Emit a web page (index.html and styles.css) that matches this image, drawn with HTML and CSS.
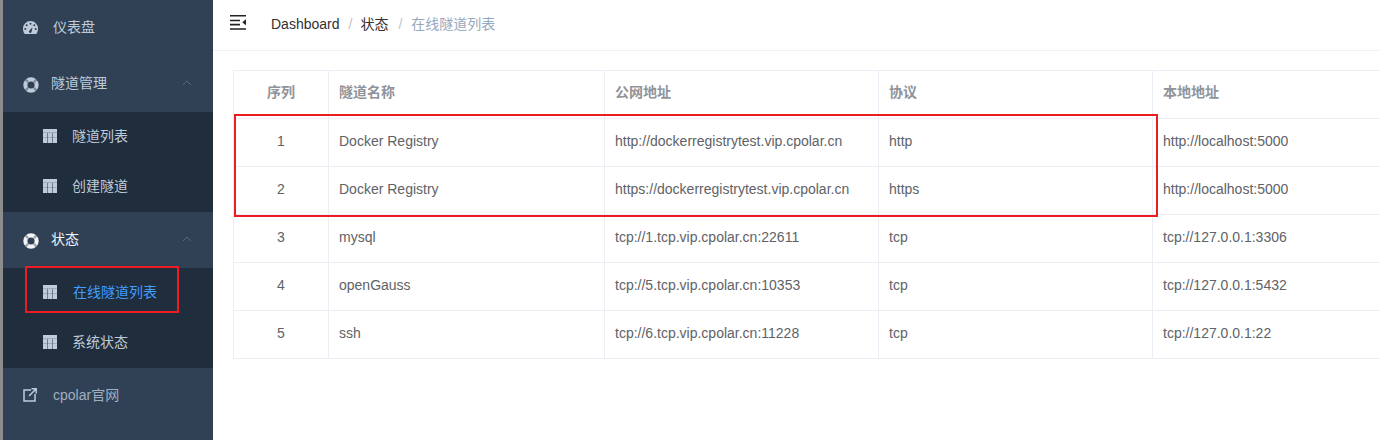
FILE: index.html
```html
<!DOCTYPE html>
<html lang="zh">
<head>
<meta charset="utf-8">
<title>在线隧道列表</title>
<link rel="stylesheet" href="styles.css">
</head>
<body>
<svg class="defs" width="0" height="0" aria-hidden="true">
  <defs>
    <symbol id="i-table" viewBox="0 0 14 14">
      <path fill="currentColor" d="M0 0h14v14H0z"/>
      <path fill="#1f2d3d" fill-opacity=".2" d="M0 3h14v1H0zM0 8h14v1H0z"/>
      <path fill="#1f2d3d" fill-opacity=".5" d="M4 4h1v10H4zM9 4h1v10H9z"/>
    </symbol>
    <symbol id="i-ring" viewBox="0 0 16 16">
      <path fill="currentColor" fill-rule="evenodd" d="M8 .3a7.700 7.700 0 1 1 0 15.400A7.700 7.700 0 0 1 8 .3zM8 4.400a3.600 3.600 0 1 0 0 7.200 3.600 3.600 0 0 0 0-7.200z"/>
      <path stroke="#304156" stroke-width="2.400" stroke-opacity=".45" d="M2.500 2.500l2.600 2.600M13.500 2.500l-2.600 2.600M2.500 13.500l2.600-2.600M13.500 13.500l-2.600-2.600"/>
    </symbol>
  </defs>
</svg>
<div class="app">
  <aside class="sidebar">
    <a class="item"><svg class="ico-gauge" viewBox="0 0 15 13"><path fill="currentColor" fill-rule="evenodd" d="M7.500 0A7.500 7.500 0 0 1 15 7.500c0 1.900-.5 3.700-1.500 5.200-.2.2-.4.3-.7.3H2.200c-.3 0-.5-.1-.7-.3A8.500 8.500 0 0 1 0 7.500 7.500 7.500 0 0 1 7.500 0zM7.500 1.700a1 1 0 1 0 0 2 1 1 0 0 0 0-2zM3.700 3.300a1 1 0 1 0 0 2 1 1 0 0 0 0-2zM11.300 3.300a1 1 0 1 0 0 2 1 1 0 0 0 0-2zM2.300 7a1 1 0 1 0 0 2 1 1 0 0 0 0-2zM12.700 7a1 1 0 1 0 0 2 1 1 0 0 0 0-2zM6.600 9.400a1.300 1.300 0 1 0 1.800 1.800c.4-.4 1-3.700 1-4.600-.7.5-2.400 2.400-2.800 2.800z"/></svg><span class="label">仪表盘</span></a>

    <div class="item head"><svg class="ico-ring"><use href="#i-ring"/></svg><span class="label tight">隧道管理</span><svg class="chev" viewBox="0 0 10 6"><path d="M1 5l4-4 4 4" fill="none" stroke="currentColor"/></svg></div>
    <div class="sub">
      <a class="sub-item"><svg class="ico-table"><use href="#i-table"/></svg><span>隧道列表</span></a>
      <a class="sub-item"><svg class="ico-table"><use href="#i-table"/></svg><span>创建隧道</span></a>
    </div>

    <div class="item head is-open"><svg class="ico-ring"><use href="#i-ring"/></svg><span class="label tight">状态</span><svg class="chev" viewBox="0 0 10 6"><path d="M1 5l4-4 4 4" fill="none" stroke="currentColor"/></svg></div>
    <div class="sub">
      <a class="sub-item is-active"><svg class="ico-table"><use href="#i-table"/></svg><span>在线隧道列表</span></a>
      <a class="sub-item"><svg class="ico-table"><use href="#i-table"/></svg><span>系统状态</span></a>
    </div>

    <a class="item muted"><svg class="ico-link" viewBox="0 0 14 14"><path d="M8 2H1v11h11V6M6 8l7-7M8.500 .8h4.700v4.700" fill="none" stroke="currentColor" stroke-width="1.500"/></svg><span class="label">cpolar官网</span></a>

    <div class="mark mark-side"></div>
  </aside>

  <main class="main">
    <header class="navbar">
      <svg class="ico-ham" viewBox="0 0 16 15"><path fill="#222" d="M0 0h16v1.600H0zM0 4.700h10v1.600H0zM0 8.800h10v1.600H0zM0 13.200h16v1.600H0zM16 4.200v6l-3.800-3z"/></svg>
      <nav class="crumbs">
        <span class="crumb">Dashboard</span><i>/</i><span class="crumb cjk">状态</span><i class="wide">/</i><span class="crumb cjk last">在线隧道列表</span>
      </nav>
    </header>
    <section class="content">
      <table class="tbl">
        <colgroup><col class="c1"><col class="c2"><col class="c3"><col class="c4"><col class="c5"></colgroup>
        <thead>
          <tr><th class="num">序列</th><th>隧道名称</th><th>公网地址</th><th>协议</th><th>本地地址</th></tr>
        </thead>
        <tbody>
          <tr><td class="num">1</td><td>Docker Registry</td><td>http://dockerregistrytest.vip.cpolar.cn</td><td>http</td><td>http://localhost:5000</td></tr>
          <tr><td class="num">2</td><td>Docker Registry</td><td>https://dockerregistrytest.vip.cpolar.cn</td><td>https</td><td>http://localhost:5000</td></tr>
          <tr><td class="num">3</td><td>mysql</td><td>tcp://1.tcp.vip.cpolar.cn:22611</td><td>tcp</td><td>tcp://127.0.0.1:3306</td></tr>
          <tr><td class="num">4</td><td>openGauss</td><td>tcp://5.tcp.vip.cpolar.cn:10353</td><td>tcp</td><td>tcp://127.0.0.1:5432</td></tr>
          <tr><td class="num">5</td><td>ssh</td><td>tcp://6.tcp.vip.cpolar.cn:11228</td><td>tcp</td><td>tcp://127.0.0.1:22</td></tr>
        </tbody>
      </table>
      <div class="mark mark-table"></div>
    </section>
  </main>
</div>
</body>
</html>
```
FILE: styles.css
```css
* { box-sizing: border-box; }
html, body { margin: 0; height: 100%; overflow: hidden; background: #fff; }
body {
  font-family: "Liberation Sans", "Noto Sans CJK SC", sans-serif;
  font-size: 14px;
  color: #606266;
}
.defs { position: absolute; }
.app { display: flex; height: 440px; width: 1380px; }

/* sidebar */
.sidebar {
  position: relative;
  flex: 0 0 213px;
  background: #304156;
  border-left: 3px solid #8c8c8c;
  color: #bfcbd9;
  overflow: hidden;
}
.item {
  display: flex;
  align-items: center;
  height: 56px;
  padding-left: 20px;
  padding-bottom: 2px;
  position: relative;
}
.label { margin-left: 15px; margin-bottom: 2px; }
.label.tight { margin-left: 12px; }
.is-open { color: #f4f4f5; }
.muted { color: #a0aebf; }
.muted .label { margin-left: 16px; }
.ico-gauge { width: 15px; height: 13px; }
.ico-ring { width: 16px; height: 16px; margin-top: 3px; color: #bfcbd9; }
.is-open .ico-ring { color: #f4f4f5; }
.ico-link { width: 14px; height: 14px; color: #bfcbd9; }
.chev {
  position: absolute;
  right: 21px;
  top: 24px;
  width: 10px;
  height: 6px;
  color: #56677c;
}
.sub { background: #1f2d3d; padding: 0; }
.sub-item {
  display: flex;
  align-items: center;
  height: 50px;
  padding-left: 40px;
  padding-bottom: 2px;
}
.sub-item span { margin-left: 15px; margin-bottom: 2px; }
.sub-item.is-active span { margin-left: 16px; }
.ico-table { width: 14px; height: 14px; color: #bfcbd9; }
.is-active { color: #409eff; }

/* annotation frames */
.mark { position: absolute; border: 2px solid #ed1c24; pointer-events: none; }
.mark-side { left: 22px; top: 266px; width: 154px; height: 47px; }
.mark-table { left: 21px; top: 63px; width: 924px; height: 103px; }

/* main */
.main { flex: 1; min-width: 0; display: flex; flex-direction: column; overflow: hidden; }
.navbar {
  display: flex;
  align-items: center;
  height: 51px;
  flex: none;
  border-bottom: 1px solid #f0f1f2;
  padding-left: 17px;
  padding-bottom: 6px;
}
.ico-ham { width: 16px; height: 15px; }
.crumbs { margin-left: 25px; color: #97a8be; display: flex; align-items: center; padding-top: 3px; }
.crumbs i { font-style: normal; color: #c0c4cc; margin: 0 8px 0 9px; }
.crumbs i.wide { margin: 0 9px 0 10px; }
.crumb { color: #303133; }
.crumb.cjk { margin-bottom: 2px; }
.crumb.last { color: #97a8be; }

.content { position: relative; flex: 1; padding: 19px 0 0 20px; overflow: hidden; }
.tbl {
  table-layout: fixed;
  border-collapse: collapse;
  width: 1227px;
  border-top: 1px solid #ebeef5;
  border-left: 1px solid #ebeef5;
}
.c1 { width: 95px; }
.c2 { width: 276px; }
.c3 { width: 274px; }
.c4 { width: 274px; }
.c5 { width: 308px; }
th, td {
  height: 48px;
  padding: 0 10px 4px;
  text-align: left;
  white-space: nowrap;
  border-right: 1px solid #ebeef5;
  border-bottom: 1px solid #ebeef5;
  font-weight: 400;
}
th { color: #909399; font-weight: 700; padding-bottom: 8px; }
.num { text-align: center; }
```
